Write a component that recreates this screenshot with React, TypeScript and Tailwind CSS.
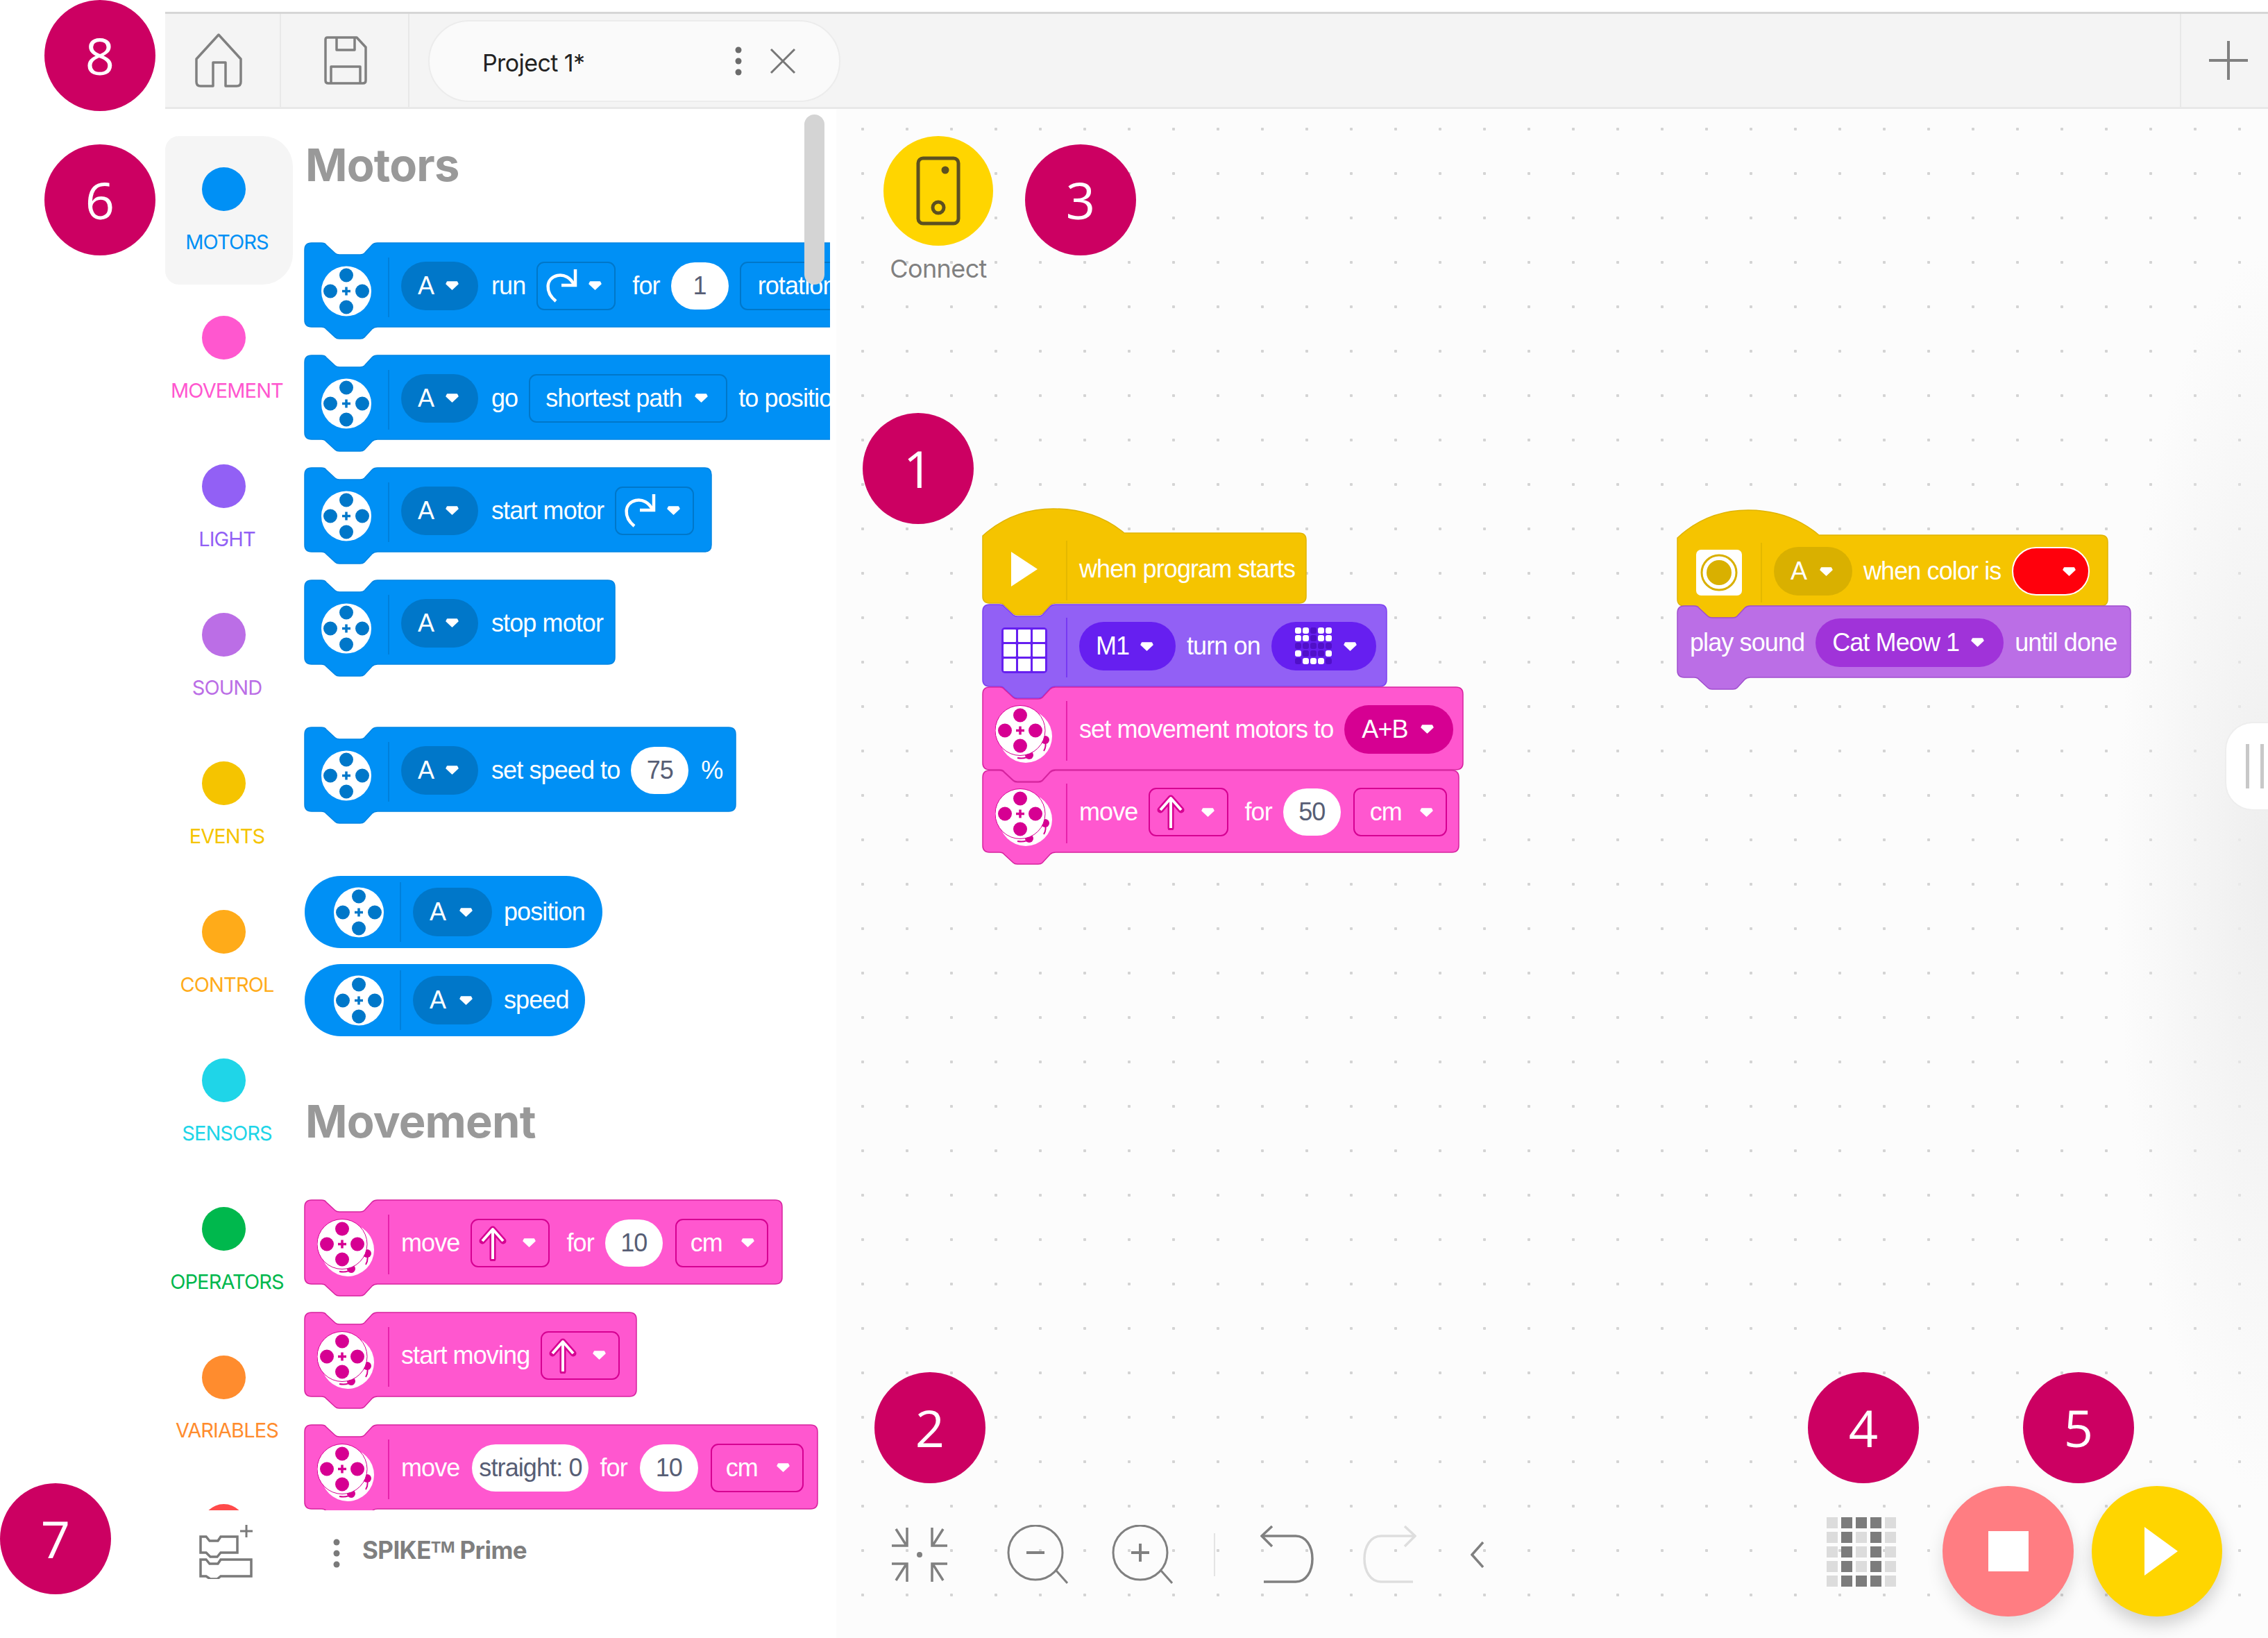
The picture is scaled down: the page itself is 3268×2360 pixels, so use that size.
import React from "react";

const CATEGORIES = [
  { label: "MOTORS", dot: "bg-[#0090f5]", text: "text-[#0090f5]", active: true },
  { label: "MOVEMENT", dot: "bg-[#ff57cf]", text: "text-[#ff57cf]" },
  { label: "LIGHT", dot: "bg-[#9260f5]", text: "text-[#9260f5]" },
  { label: "SOUND", dot: "bg-[#bb6ee6]", text: "text-[#bb6ee6]" },
  { label: "EVENTS", dot: "bg-[#f5c400]", text: "text-[#f5c400]" },
  { label: "CONTROL", dot: "bg-[#ffab19]", text: "text-[#ffab19]" },
  { label: "SENSORS", dot: "bg-[#1fd5e8]", text: "text-[#1fd5e8]" },
  { label: "OPERATORS", dot: "bg-[#00b84d]", text: "text-[#00b84d]" },
  { label: "VARIABLES", dot: "bg-[#ff8c2e]", text: "text-[#ff8c2e]" },
  { label: "", dot: "bg-[#ff4a4a]", text: "text-[#ff4a4a]" },
];

const BLUE = { fill: "#0090f5", stroke: "#0085e3", dark: "#0077c9" };
const PINK = { fill: "#ff57cf", stroke: "#d6239f", dark: "#d60092" };
const LIGHT = { fill: "#9260f5", stroke: "#7c3ff0", dark: "#661ff0" };
const YELLOW = { fill: "#f5c400", stroke: "#e0b400", dark: "#d9b000" };
const SOUND = { fill: "#bb6ee6", stroke: "#a04fce", dark: "#a033d9" };

type Tone = typeof BLUE;

function blockPath(w: number, h: number, hat: number) {
  const bottom = `V${h - 10} Q${w},${h} ${w - 10},${h} H105 Q100,${h} 97,${h + 3} L86,${h + 15} Q84,${h + 17} 80,${h + 17} H50 Q46,${h + 17} 44,${h + 15} L31,${h + 3} Q29,${h} 24,${h} H10 Q0,${h} 0,${h - 10} Z`;
  if (hat) {
    return `M0,${hat + 4} C30,12 65,0 102,0 C142,0 176,12 204,${hat} H${w - 10} Q${w},${hat} ${w},${hat + 10} ${bottom}`;
  }
  return `M0,10 Q0,0 10,0 H24 Q29,0 31,3 L44,15 Q46,17 50,17 H80 Q84,17 86,15 L97,3 Q100,0 105,0 H${w - 10} Q${w},0 ${w},10 ${bottom}`;
}

function Block({
  w,
  h,
  tone,
  hat = 0,
  icon,
  className = "",
  children,
}: {
  w: number;
  h: number;
  tone: Tone;
  hat?: number;
  icon?: React.ReactNode;
  className?: string;
  children: React.ReactNode;
}) {
  return (
    <div className={`relative shrink-0 ${className}`}>
      <svg width={w} height={h + 18} className="absolute left-0 top-0 overflow-visible">
        <path d={blockPath(w, h, hat)} fill={tone.fill} stroke={tone.stroke} strokeWidth="1.5" />
      </svg>
      <Row w={w} h={h} hat={hat} tone={tone} icon={icon}>
        {children}
      </Row>
    </div>
  );
}

function Row({ w, h, hat, tone, icon, children }: { w: number; h: number; hat: number; tone: Tone; icon?: React.ReactNode; children: React.ReactNode }) {
  const style = { width: w, height: h, paddingTop: hat };
  return (
    <div className="relative flex items-center" style={style}>
      {icon && (
        <>
          <div className="flex h-full w-[120px] shrink-0 items-center justify-center pt-[17px]">{icon}</div>
          <div className="mt-[6px] h-[86px] w-[2px] shrink-0 opacity-60" style={{ backgroundColor: tone.dark }} />
        </>
      )}
      <div className={`flex items-center gap-[16px] pt-[2px] ${icon ? "pl-[17px]" : "pl-[18px]"}`}>{children}</div>
    </div>
  );
}

function Oval({ w, children }: { w: number; children: React.ReactNode }) {
  return (
    <div className="flex h-[104px] items-center rounded-full bg-[#0090f5]" style={{ width: w }}>
      <div className="flex w-[137px] shrink-0 items-center justify-center pl-[19px]">
        <Wheel hole={BLUE.dark} />
      </div>
      <div className="h-[86px] w-[2px] shrink-0 bg-[#0077c9] opacity-60" />
      <div className="flex items-center gap-[17px] pl-[17px]">{children}</div>
    </div>
  );
}

function Txt({ children, className = "" }: { children: React.ReactNode; className?: string }) {
  return <span className={`whitespace-nowrap text-[36px] leading-none tracking-[-0.9px] text-white ${className}`}>{children}</span>;
}

function Arrow() {
  return (
    <svg width="23" height="17" viewBox="0 0 23 17" className="shrink-0">
      <path d="M4.5 3 H18.5 L20 6 L11.5 14 L3 6 Z" fill="#fff" stroke="#fff" strokeWidth="1.5" strokeLinejoin="round" />
    </svg>
  );
}

function Pill({ tone, w, children, className = "" }: { tone: Tone; w: number; children: React.ReactNode; className?: string }) {
  return (
    <div
      className={`flex h-[70px] shrink-0 items-center justify-between rounded-full pl-[24px] pr-[26px] text-[36px] leading-none tracking-[-0.9px] text-white ${className}`}
      style={{ width: w, backgroundColor: tone.dark }}
    >
      <span className="whitespace-nowrap">{children}</span>
      <Arrow />
    </div>
  );
}

function Box({ tone, w, children, className = "" }: { tone: Tone; w: number; children: React.ReactNode; className?: string }) {
  return (
    <div
      className={`flex h-[70px] shrink-0 items-center justify-between rounded-[11px] border-2 pl-[10px] pr-[16px] text-[36px] leading-none tracking-[-0.9px] text-white ${className}`}
      style={{ width: w, borderColor: tone.dark }}
    >
      {children}
      <Arrow />
    </div>
  );
}

function Input({ w, children, className = "" }: { w: number; children: React.ReactNode; className?: string }) {
  return (
    <div
      className={`flex h-[68px] shrink-0 items-center justify-center whitespace-nowrap rounded-full bg-white text-[36px] leading-none tracking-[-0.9px] text-[#575e75] ${className}`}
      style={{ width: w }}
    >
      {children}
    </div>
  );
}

function Wheel({ hole }: { hole: string }) {
  return (
    <svg width="72" height="73" viewBox="0 0 72 73" className="shrink-0">
      <circle cx="36" cy="36.5" r="36" fill="#fff" />
      <circle cx="36" cy="13.5" r="10" fill={hole} />
      <circle cx="36" cy="59.5" r="10" fill={hole} />
      <circle cx="13" cy="36.5" r="10" fill={hole} />
      <circle cx="59" cy="36.5" r="10" fill={hole} />
      <path d="M36 30.5 V42.5 M30 36.5 H42" stroke={hole} strokeWidth="3.5" />
    </svg>
  );
}

function MoveWheel() {
  const c = PINK.dark;
  return (
    <svg width="84" height="84" viewBox="0 0 84 84" className="shrink-0">
      <circle cx="44" cy="45" r="38" fill="#fff" />
      <circle cx="72" cy="50" r="6" fill={c} />
      <circle cx="49" cy="72" r="6" fill={c} />
      <path d="M32 76 Q44 78 50 72 M72 50 Q74 60 70 66" stroke={c} strokeWidth="2" fill="none" />
      <circle cx="36" cy="36.5" r="36" fill="#fff" stroke={c} strokeWidth="1" />
      <circle cx="36" cy="14.5" r="10" fill={c} />
      <circle cx="36" cy="58.5" r="10" fill={c} />
      <circle cx="14" cy="36.5" r="10" fill={c} />
      <circle cx="58" cy="36.5" r="10" fill={c} />
      <path d="M36 30.5 V42.5 M30 36.5 H42" stroke={c} strokeWidth="3.5" />
    </svg>
  );
}

function RotateIcon() {
  return (
    <svg width="48" height="48" viewBox="0 0 48 48" fill="none" stroke="#fff" className="shrink-0">
      <path d="M16 46 C0 33 1 13 18 9 C28 7 37 12 42 22" strokeWidth="4.5" />
      <path d="M44 0 V23 H24" strokeWidth="4.5" />
    </svg>
  );
}

function UpArrow({ dark }: { dark: string }) {
  return (
    <svg width="40" height="52" viewBox="0 0 40 52" fill="none" className="shrink-0">
      <path d="M20 49 V6 M5 23 L20 6 L35 23" stroke={dark} strokeWidth="9" strokeLinejoin="round" strokeLinecap="round" />
      <path d="M20 49 V6 M5 23 L20 6 L35 23" stroke="#fff" strokeWidth="4" strokeLinejoin="round" />
    </svg>
  );
}

function LightGrid() {
  return (
    <svg width="66" height="66" viewBox="0 0 66 66" className="-mt-[4px] shrink-0">
      <rect width="66" height="66" rx="5" fill="#661ff0" />
      {[3, 24, 45].map((y) =>
        [3, 24, 45].map((x) => <rect key={`${x}-${y}`} x={x} y={y} width="18" height="18" rx="1" fill="#fff" />),
      )}
    </svg>
  );
}

function Smile() {
  const on = ["XX.XX", "XX.XX", ".....", "X...X", ".XXX."];
  return (
    <svg width="54" height="54" viewBox="0 0 54 54" className="block shrink-0">
      {on.map((row, r) =>
        row.split("").map((c, i) => (
          <rect key={`${r}-${i}`} x={i * 11} y={r * 11} width="9" height="9" rx="3" fill={c === "X" ? "#fff" : "#5010c8"} />
        )),
      )}
    </svg>
  );
}

function PlayTri() {
  return (
    <svg width="38" height="50" viewBox="0 0 38 50" className="-mt-[14px] shrink-0">
      <path d="M0 0 L38 25 L0 50 Z" fill="#fff" />
    </svg>
  );
}

function ColorSensor() {
  return (
    <svg width="66" height="66" viewBox="0 0 66 66" className="-mt-[12px] shrink-0">
      <rect width="66" height="66" rx="7" fill="#fff" />
      <circle cx="33" cy="33" r="25" fill="none" stroke="#d9b000" strokeWidth="3" />
      <circle cx="33" cy="33" r="18" fill="#d9b000" />
    </svg>
  );
}

function Badge({ className, children }: { className: string; children: React.ReactNode }) {
  return (
    <div
      className={`absolute z-20 flex h-[160px] w-[160px] items-center justify-center rounded-full bg-[#cc0062] font-['Open_Sans',sans-serif] text-[74px] leading-none text-white ${className}`}
    >
      {children}
    </div>
  );
}

function HomeIcon() {
  return (
    <svg width="68" height="78" viewBox="0 0 68 78" fill="none" stroke="#808080" strokeWidth="3.5" strokeLinejoin="round">
      <path d="M34 2 L66 37 V70 Q66 76 60 76 H44 V42 H26 V76 H8 Q2 76 2 70 V37 Z" />
    </svg>
  );
}

function SaveIcon() {
  return (
    <svg width="62" height="70" viewBox="0 0 62 70" fill="none" stroke="#808080" strokeWidth="3.5" strokeLinejoin="round">
      <path d="M5 2 H47 L60 16 V64 Q60 68 56 68 H6 Q2 68 2 64 V5 Q2 2 5 2 Z" />
      <path d="M18 2 V20 H44 V2" />
      <path d="M10 68 V44 H52 V68" />
    </svg>
  );
}

function StackIcon() {
  return (
    <svg width="78" height="78" viewBox="0 0 78 78" fill="none" stroke="#7a7a7a" strokeWidth="3.5">
      <path d="M2 17 H10 L15 23 H27 L31 17 H55 V40 H31 L26 46 H16 L10 40 H2 Z" />
      <path d="M2 50 H10 L15 56 H27 L31 50 H75 V74 H31 L26 78 H16 L10 74 H2 Z" />
      <path d="M68 0 V18 M59 9 H77" strokeWidth="3" />
    </svg>
  );
}

function CenterIcon() {
  return (
    <svg width="84" height="82" viewBox="0 0 84 82" fill="none" stroke="#808080" strokeWidth="3.5">
      <path d="M24 2 V28 H2 M8 4 L22 26" />
      <path d="M60 2 V28 H82 M76 4 L62 26" />
      <path d="M24 80 V54 H2 M8 78 L22 56" />
      <path d="M60 80 V54 H82 M76 78 L62 56" />
      <circle cx="42" cy="41" r="4" fill="#808080" stroke="none" />
    </svg>
  );
}

function ZoomIcon({ plus }: { plus?: boolean }) {
  return (
    <svg width="88" height="86" viewBox="0 0 88 86" fill="none" stroke="#808080" strokeWidth="3">
      <circle cx="41" cy="40" r="39" />
      <path d="M71 66 L87 84" />
      <path d="M28 40 H54" strokeWidth="4" />
      {plus && <path d="M41 27 V53" strokeWidth="4" />}
    </svg>
  );
}

function UndoIcon({ redo }: { redo?: boolean }) {
  return (
    <svg
      width="77"
      height="84"
      viewBox="0 0 77 84"
      fill="none"
      stroke={redo ? "#dedede" : "#808080"}
      strokeWidth="3.5"
      className={redo ? "-scale-x-100" : ""}
    >
      <path d="M17 1 L2 15 L17 30" />
      <path d="M2 15 H51 C66 15 75 30 75 48 C75 66 66 81 51 81 H5" />
    </svg>
  );
}

function LedIcon() {
  const rows = [".XXX.", ".X.X.", ".X.X.", ".X.X.", ".XXX."];
  return (
    <div className="mt-[2px] grid grid-cols-5 gap-[5px]">
      {rows.flatMap((row, r) =>
        row.split("").map((c, i) => (
          <div key={`${r}-${i}`} className={`h-[16px] w-[16px] ${c === "X" ? "bg-[#7c7c7c]" : "bg-[#dcdcdc]"}`} />
        )),
      )}
    </div>
  );
}

export default function App() {
  return (
    <div className="relative flex h-[2360px] w-[3268px] flex-col overflow-hidden bg-white pl-[238px] pt-[17px] font-['Liberation_Sans',Arial,sans-serif]">
      <Badge className="left-[64px] top-0">8</Badge>
      <Badge className="left-[64px] top-[208px]">6</Badge>
      <Badge className="left-0 top-[2137px]">7</Badge>
      <Badge className="left-[1243px] top-[595px]">1</Badge>
      <Badge className="left-[1260px] top-[1977px]">2</Badge>
      <Badge className="left-[1477px] top-[208px]">3</Badge>
      <Badge className="left-[2605px] top-[1977px]">4</Badge>
      <Badge className="left-[2915px] top-[1977px]">5</Badge>

      {/* tabs bar */}
      <header className="flex h-[140px] shrink-0 items-stretch border-y-[3px] border-b-[#e8e8e8] border-t-[#d6d6d6] bg-[#f4f4f4]">
        <div className="flex w-[167px] items-center justify-center border-r-2 border-[#e8e8e8] pr-[12px]">
          <HomeIcon />
        </div>
        <div className="flex w-[185px] items-center justify-center border-r-2 border-[#e8e8e8] pl-[2px]">
          <SaveIcon />
        </div>
        <div className="ml-[27px] mt-[9px] flex h-[118px] w-[594px] items-center self-start rounded-full border-2 border-[#ececec] bg-[#fafafa] pl-[76px] pr-[62px]">
          <span className="pt-[4px] font-['Inter',sans-serif] text-[34px] tracking-[-0.6px] text-[#222]">Project 1*</span>
          <svg width="10" height="42" viewBox="0 0 10 42" className="ml-auto">
            <circle cx="5" cy="5" r="4.5" fill="#6b6b6b" />
            <circle cx="5" cy="21" r="4.5" fill="#6b6b6b" />
            <circle cx="5" cy="37" r="4.5" fill="#6b6b6b" />
          </svg>
          <svg width="38" height="38" viewBox="0 0 38 38" stroke="#777" strokeWidth="3" className="ml-[40px]">
            <path d="M2 2 L36 36 M36 2 L2 36" />
          </svg>
        </div>
        <div className="ml-auto flex w-[127px] items-center justify-center border-l-2 border-[#e8e8e8] pl-[10px]">
          <svg width="56" height="56" viewBox="0 0 56 56" stroke="#808080" strokeWidth="4">
            <path d="M28 0 V56 M0 28 H56" />
          </svg>
        </div>
      </header>

      <main className="flex min-h-0 flex-1">
        {/* palette */}
        <aside className="flex w-[967px] shrink-0 flex-col">
          <div className="relative flex h-[2019px] overflow-hidden">
            <nav className="flex w-[184px] shrink-0 flex-col pt-[39px]">
              {CATEGORIES.map((c) => (
                <div
                  key={c.dot}
                  className={`flex h-[214px] shrink-0 flex-col items-center rounded-l-[20px] rounded-r-[44px] pt-[45px] ${c.active ? "bg-[#f5f5f5]" : ""}`}
                >
                  <div className={`mr-[16px] h-[63px] w-[63px] shrink-0 rounded-full ${c.dot}`} />
                  <div className={`mr-[6px] mt-[27px] whitespace-nowrap font-['Inter',sans-serif] text-[29px] leading-[36px] tracking-[-0.9px] ${c.text}`}>
                    {c.label}
                  </div>
                </div>
              ))}
            </nav>
            <div className="flex w-[774px] shrink-0 flex-col items-start overflow-hidden pl-[17px]">
              <h2 className="mb-[77px] ml-[1px] mt-[46px] h-[70px] font-['Inter',sans-serif] text-[65px] font-bold leading-[70px] tracking-[-0.8px] text-[#999]">
                Motors
              </h2>
              <Block w={900} h={121} tone={BLUE} icon={<Wheel hole={BLUE.dark} />} className="mb-[41px]">
                <Pill tone={BLUE} w={111} className="mr-[3px]">A</Pill>
                <Txt>run</Txt>
                <Box tone={BLUE} w={114}><RotateIcon /></Box>
                <Txt className="ml-[8px]">for</Txt>
                <Input w={83}>1</Input>
                <Box tone={BLUE} w={190} className="pl-[24px]">rotations</Box>
              </Block>
              <Block w={900} h={121} tone={BLUE} icon={<Wheel hole={BLUE.dark} />} className="mb-[41px]">
                <Pill tone={BLUE} w={111} className="mr-[3px]">A</Pill>
                <Txt>go</Txt>
                <Box tone={BLUE} w={286} className="pl-[22px] pr-[24px]">shortest path</Box>
                <Txt>to position</Txt>
              </Block>
              <Block w={586} h={121} tone={BLUE} icon={<Wheel hole={BLUE.dark} />} className="mb-[41px]">
                <Pill tone={BLUE} w={111} className="mr-[3px]">A</Pill>
                <Txt>start motor</Txt>
                <Box tone={BLUE} w={114}><RotateIcon /></Box>
              </Block>
              <Block w={447} h={121} tone={BLUE} icon={<Wheel hole={BLUE.dark} />} className="mb-[91px]">
                <Pill tone={BLUE} w={111} className="mr-[3px]">A</Pill>
                <Txt>stop motor</Txt>
              </Block>
              <Block w={621} h={121} tone={BLUE} icon={<Wheel hole={BLUE.dark} />} className="mb-[93px]">
                <Pill tone={BLUE} w={111} className="mr-[3px]">A</Pill>
                <Txt>set speed to</Txt>
                <Input w={83}>75</Input>
                <Txt className="ml-[2px]">%</Txt>
              </Block>
              <div className="mb-[23px]">
                <Oval w={429}>
                  <Pill tone={BLUE} w={114}>A</Pill>
                  <Txt>position</Txt>
                </Oval>
              </div>
              <Oval w={404}>
                <Pill tone={BLUE} w={114}>A</Pill>
                <Txt>speed</Txt>
              </Oval>
              <h2 className="mb-[78px] ml-[1px] mt-[88px] h-[70px] font-['Inter',sans-serif] text-[65px] font-bold leading-[70px] tracking-[-0.8px] text-[#999]">
                Movement
              </h2>
              <Block w={688} h={121} tone={PINK} icon={<MoveWheel />} className="mb-[41px]">
                <Txt>move</Txt>
                <Box tone={PINK} w={114}><UpArrow dark={PINK.dark} /></Box>
                <Txt className="ml-[8px]">for</Txt>
                <Input w={83}>10</Input>
                <Box tone={PINK} w={134} className="ml-[2px] pl-[20px]">cm</Box>
              </Block>
              <Block w={478} h={121} tone={PINK} icon={<MoveWheel />} className="mb-[41px]">
                <Txt>start moving</Txt>
                <Box tone={PINK} w={114}><UpArrow dark={PINK.dark} /></Box>
              </Block>
              <Block w={739} h={121} tone={PINK} icon={<MoveWheel />}>
                <Txt>move</Txt>
                <Input w={168} className="ml-[2px]">straight: 0</Input>
                <Txt>for</Txt>
                <Input w={84} className="ml-[2px]">10</Input>
                <Box tone={PINK} w={134} className="ml-[2px] pl-[20px]">cm</Box>
              </Block>
            </div>
            <div className="absolute left-[921px] top-[8px] h-[245px] w-[29px] rounded-full bg-[#d4d4d4]" />
          </div>
          <div className="flex flex-1 items-start pl-[49px] pt-[21px]">
            <StackIcon />
            <svg width="10" height="42" viewBox="0 0 10 42" className="ml-[115px] mt-[20px]">
              <circle cx="5" cy="5" r="4.5" fill="#7a7a7a" />
              <circle cx="5" cy="21" r="4.5" fill="#7a7a7a" />
              <circle cx="5" cy="37" r="4.5" fill="#7a7a7a" />
            </svg>
            <span className="ml-[32px] mt-[16px] whitespace-nowrap font-['Inter',sans-serif] text-[35px] font-bold leading-[40px] tracking-[-0.6px] text-[#7f7f7f]">
              SPIKE<sup className="top-[-9px] text-[22px] leading-none">TM</sup> Prime
            </span>
          </div>
        </aside>

        {/* canvas */}
        <section className="relative flex-1 bg-[#fcfcfc] bg-[radial-gradient(circle,#d4d4d4_2px,transparent_2.5px)] bg-[size:64px_64px] bg-[position:6px_-3px]">
          <div className="absolute inset-y-[200px] right-0 w-[220px] bg-[radial-gradient(ellipse_at_right,#eeeeee,transparent_70%)]" />

          <div className="absolute left-[68px] top-[39px] flex w-[158px] flex-col items-center">
            <div className="flex h-[158px] w-[158px] items-center justify-center rounded-full bg-[#ffd500]">
              <svg width="64" height="100" viewBox="0 0 64 100" fill="none" stroke="#5c5020" strokeWidth="5">
                <rect x="3" y="3" width="58" height="94" rx="7" />
                <circle cx="42" cy="20" r="3" fill="#5c5020" />
                <circle cx="32" cy="74" r="8" />
              </svg>
            </div>
            <span className="mt-[13px] whitespace-nowrap font-['Inter',sans-serif] text-[36px] leading-[40px] tracking-[-0.6px] text-[#808080]">Connect</span>
          </div>

          <div className="absolute left-[211px] top-[576px] flex flex-col items-start">
            <Block w={466} h={136} hat={35} tone={YELLOW} icon={<PlayTri />}>
              <Txt>when program starts</Txt>
            </Block>
            <Block w={582} h={118} tone={LIGHT} icon={<LightGrid />} className="mt-[2px]">
              <Pill tone={LIGHT} w={139} className="pr-[30px]">M1</Pill>
              <Txt>turn on</Txt>
              <Pill tone={LIGHT} w={151} className="pl-[34px] pr-[18px]"><Smile /></Pill>
            </Block>
            <Block w={692} h={119} tone={PINK} icon={<MoveWheel />} className="mt-[1px]">
              <Txt>set movement motors to</Txt>
              <Pill tone={PINK} w={157} className="pl-[25px]">A+B</Pill>
            </Block>
            <Block w={686} h={118} tone={PINK} icon={<MoveWheel />} className="mt-[1px]">
              <Txt>move</Txt>
              <Box tone={PINK} w={115}><UpArrow dark={PINK.dark} /></Box>
              <Txt className="ml-[7px]">for</Txt>
              <Input w={83}>50</Input>
              <Box tone={PINK} w={135} className="ml-[2px] pl-[22px]">cm</Box>
            </Block>
          </div>

          <div className="absolute left-[1212px] top-[578px] flex flex-col items-start">
            <Block w={620} h={138} hat={36} tone={YELLOW} icon={<ColorSensor />}>
              <Pill tone={YELLOW} w={113}>A</Pill>
              <Txt>when color is</Txt>
              <div className="flex h-[70px] w-[112px] items-center justify-end rounded-full border-2 border-white bg-[#ff000c] pr-[16px]">
                <Arrow />
              </div>
            </Block>
            <Block w={653} h={103} tone={SOUND}>
              <Txt>play sound</Txt>
              <Pill tone={SOUND} w={271}>Cat Meow 1</Pill>
              <Txt>until done</Txt>
            </Block>
          </div>

          {/* canvas tools */}
          <div className="absolute left-[78px] top-[2040px] flex items-center">
            <CenterIcon />
            <div className="ml-[84px]"><ZoomIcon /></div>
            <div className="ml-[63px]"><ZoomIcon plus /></div>
            <div className="ml-[59px] h-[62px] w-[2px] bg-[#e4e4e4]" />
            <div className="ml-[65px]"><UndoIcon /></div>
            <div className="ml-[71px]"><UndoIcon redo /></div>
            <svg width="20" height="38" viewBox="0 0 20 38" fill="none" stroke="#808080" strokeWidth="3.5" className="ml-[78px]">
              <path d="M18 1 L2 19 L18 37" />
            </svg>
          </div>

          <div className="absolute right-[66px] top-[1984px] flex items-center">
            <LedIcon />
            <div className="ml-[67px] flex h-[188px] w-[189px] items-center justify-center rounded-full bg-[#ff7d82] shadow-[0_12px_24px_rgba(0,0,0,0.12)]">
              <div className="h-[58px] w-[58px] bg-white" />
            </div>
            <div className="ml-[26px] flex h-[188px] w-[188px] items-center justify-center rounded-full bg-[#ffd500] shadow-[0_12px_24px_rgba(0,0,0,0.18)]">
              <svg width="48" height="70" viewBox="0 0 48 70" className="ml-[12px]">
                <path d="M0 0 L48 35 L0 70 Z" fill="#fff" />
              </svg>
            </div>
          </div>

          <div className="absolute right-0 top-[883px] flex h-[128px] w-[62px] items-center gap-[16px] rounded-l-[40px] border-2 border-r-0 border-[#eeeeee] bg-white pl-[28px]">
            <div className="h-[64px] w-[5px] bg-[#c8c8c8]" />
            <div className="h-[64px] w-[5px] bg-[#c8c8c8]" />
          </div>
        </section>
      </main>
    </div>
  );
}
